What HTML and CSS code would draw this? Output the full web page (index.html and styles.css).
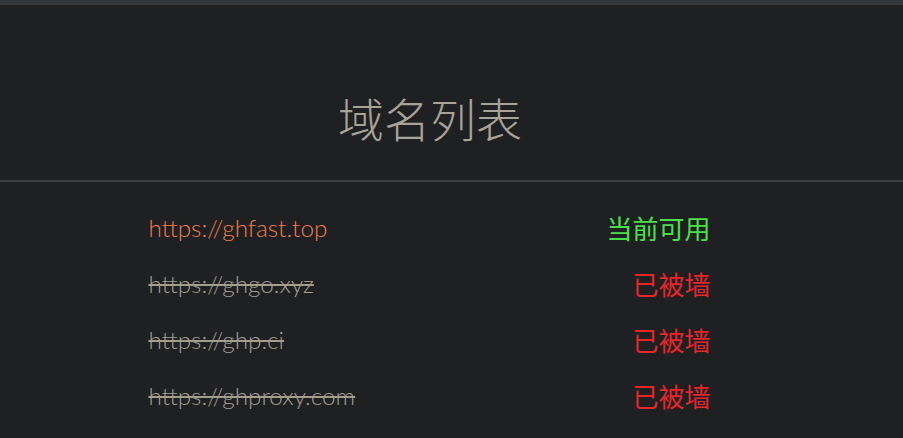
FILE: index.html
```html
<!DOCTYPE html>
<html lang="zh-CN">
<head>
    <meta charset="UTF-8">
    <meta name="viewport" content="width=device-width, initial-scale=1.0">
    <title>域名列表</title>
    <link rel="stylesheet" href="styles.css">
</head>
<body>
    <div class="top-bar"></div>

    <header class="page-header">
        <h1>域名列表</h1>
    </header>

    <ul class="domain-list">
        <li class="domain-item">
            <a class="domain-url active" href="#">https://ghfast.top</a>
            <span class="status ok">当前可用</span>
        </li>
        <li class="domain-item">
            <a class="domain-url blocked" href="#">https://ghgo.xyz</a>
            <span class="status bad">已被墙</span>
        </li>
        <li class="domain-item">
            <a class="domain-url blocked" href="#">https://ghp.ci</a>
            <span class="status bad">已被墙</span>
        </li>
        <li class="domain-item">
            <a class="domain-url blocked" href="#">https://ghproxy.com</a>
            <span class="status bad">已被墙</span>
        </li>
    </ul>
</body>
</html>
```

FILE: styles.css
```css
body {
    margin: 0;
    padding: 0;
    background-color: #1f2022;
    font-family: Lato, "Noto Sans CJK SC", sans-serif;
    overflow: hidden;
}
.top-bar {
    height: 5px;
    background-color: #33383c;
}
.page-header {
    padding: 90px 43px 40px 0;
    border-bottom: 2px solid #3b3e40;
    text-align: center;
}
.page-header h1 {
    margin: 0;
    font-family: "Noto Sans CJK SC", sans-serif;
    font-size: 46px;
    line-height: 45px;
    font-weight: 300;
    color: #a8a398;
}
.domain-list {
    list-style: none;
    margin: 0 auto;
    padding: 17px 0 0 0;
    width: 562px;
    position: relative;
    left: -22px;
}
.domain-item {
    display: flex;
    justify-content: space-between;
    align-items: center;
    height: 56px;
}
.domain-url {
    font-size: 24.3px;
    font-weight: 300;
    text-decoration: none;
}
.domain-url.active {
    color: #ee7d50;
}
.domain-url.blocked {
    color: #a39d90;
    text-decoration: line-through;
}
.status {
    font-family: "Noto Sans CJK SC", sans-serif;
    font-size: 26px;
    font-weight: 400;
}
.status.ok {
    color: #4be04b;
}
.status.bad {
    color: #e8262a;
}
```
